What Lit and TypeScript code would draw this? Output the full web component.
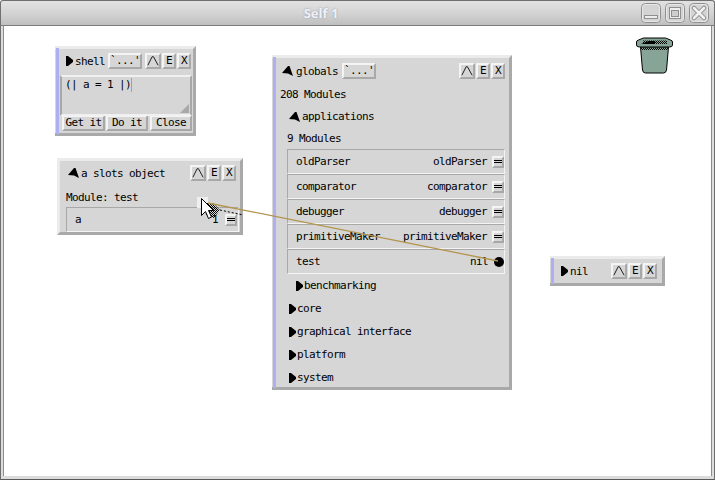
import { LitElement, html, css, svg } from "lit";
import { customElement } from "lit/decorators.js";

const closed = svg`<svg class="tri" width="7" height="10" viewBox="0 0 7 10"><path d="M0 0h2l5 4v2l-5 4H0z" fill="#000"/></svg>`;
const open = svg`<svg class="tri open" width="11" height="10" viewBox="0 0 11 10"><path d="M6 0h1.500L11 10 6 7.500 0 7z" fill="#000"/></svg>`;
const caret = svg`<svg width="14" height="12" viewBox="0 0 14 12"><path d="M1 11 6 1h1.500L13 11" fill="none" stroke="#000" stroke-width="1"/></svg>`;

@customElement("app-root")
export class AppRoot extends LitElement {
  static styles = css`
    :host { display: block; width: 715px; height: 480px; overflow: hidden; position: relative; }
    * { box-sizing: border-box; }
    .frame { width: 715px; height: 480px; display: flex; flex-direction: column; background: #fff;
      font: 11px/14px "DejaVu Sans Mono", monospace; letter-spacing: -0.62px; color: #000; }
    .titlebar { height: 26px; flex: none; position: relative; display: flex; align-items: center; justify-content: center; padding-right: 73px;
      background: linear-gradient(#e2e2e2, #d4d4d4 50%, #bfbfbf); border: 1px solid #6f6f6f; border-bottom-color: #7c7c7c;
      border-radius: 3px 3px 0 0; }
    .wtitle { font: bold 13px "Open Sans", sans-serif; letter-spacing: 0; color: #eef1f6; text-shadow: 0 0 2px #8a94a8; }
    .wm { position: absolute; right: 5px; top: 2px; display: flex; gap: 4px; }
    .wm svg { display: block; }
    .desk { flex: 1; position: relative; background: #fff; border-left: 1px solid #6f6f6f; border-right: 1px solid #6f6f6f; border-bottom: 1px solid #5a5a5a; }
    .desk-in { position: absolute; inset: 0; border: 2px solid #dcdcdc; border-top: none; border-bottom-width: 3px; }
    .desk-in2 { position: absolute; inset: 0 2px 3px 2px; border-left: 1px solid #8c8c8c; border-right: 1px solid #8c8c8c; }
    .win { position: absolute; background: #d6d6d6; border: 3px solid; border-color: #ebebeb #a9a9a9 #a9a9a9 #ebebeb; }
    .blue { border-left: none; }
    .blue::before { content: ""; position: absolute; left: 1px; top: -1px; bottom: -1px; width: 3px; background: #aeaef2; }
    .shell { left: 54px; top: 20px; width: 141px; height: 90px; padding: 4px 0 0 6px; }
    .slots { left: 56px; top: 132px; width: 186px; height: 77px; padding: 4px 4px 0 6px; }
    .globals { left: 271px; top: 29px; width: 240px; height: 335px; padding: 5px 4px 0 8px; }
    .nil { left: 549px; top: 230px; width: 115px; height: 30px; padding: 4px 5px 0 11px; }
    .head { display: flex; align-items: center; height: 16px; }
    .head .label { padding-top: 2px; }
    .tri { flex: none; margin-right: 2px; display: block; }
    .label { white-space: pre; }
    .grow { flex: 1; }
    .btn { height: 16px; display: flex; align-items: center; justify-content: center; background: #d6d6d6; white-space: pre;
      border: 2px solid; border-color: #f4f4f4 #a8a8a8 #a8a8a8 #f4f4f4; flex: none; }
    .b14 { width: 14px; margin-left: 1px; }
    .b16 { width: 16px; }
    .dots { width: 34px; margin-left: 3px; }
    .btns { display: flex; }
    .shell .tri { margin-left: 5px; }
    .shell .dots { margin-right: 3px; }
    .slots .tri { margin-left: 2px; }
    .globals .head .tri { margin-left: 2px; margin-right: 3px; }
    .globals .dots { margin-left: 4px; }
    .editor { margin: 6px 0 0 -1px; width: 132px; height: 41px; border: 2px solid; border-color: #f0f0f0 #a8a8a8 #f0f0f0 #a8a8a8; padding: 1px 3px; position: relative; }
    .editor i { display: inline-block; width: 1px; height: 14px; background: #a0a0a0; vertical-align: top; }
    .grip { position: absolute; right: 1px; bottom: 1px; }
    .actions { display: flex; gap: 1px; margin: -1px 0 0 1px; }
    .a1 { width: 43px; } .a2 { width: 42px; } .a3 { width: 42px; margin-left: 1px; }
    .module { height: 14px; margin-top: 10px; white-space: pre; }
    .slot { height: 25px; display: flex; align-items: center; border: 1px solid; border-color: #a8a8a8 #f4f4f4 #f4f4f4 #a8a8a8; padding: 0 0 0 8px; }
    .slots .slot { margin-top: 2px; width: 173px; border-width: 1.500px; }
    .slots .mini { margin-left: 7px; margin-right: 1px; }
    .line { height: 22px; display: flex; align-items: center; white-space: pre; }
    .first { height: 23px; margin-top: 3px; padding-top: 2px; }
    .sub { margin-left: 7px; }
    .rows { display: flex; flex-direction: column; margin: -1px 0 0 7px; width: 218px; }
    .mini { width: 12px; height: 12px; margin: 0 0 0 5px; background: #d6d6d6; border: 2px solid; border-color: #f4f4f4 #a8a8a8 #a8a8a8 #f4f4f4; display: flex; flex-direction: column; justify-content: center; gap: 1px; flex: none; }
    .mini b { display: block; height: 1px; background: #000; }
    .dot { width: 10px; height: 10px; border-radius: 50%; background: #000; margin: 0 0 0 6px; flex: none; }
    .tree { display: flex; align-items: center; height: 23px; }
    .tree .tri { margin-right: 1px; }
    .tree .tri.open { margin-right: 2px; }
    .overlay { position: absolute; left: 0; top: 0; pointer-events: none; }
    .trash { position: absolute; left: 635px; top: 11px; }
  `;

  private controls() {
    return html`<div class="btns"><div class="btn b16">${caret}</div><div class="btn b14">E</div><div class="btn b14">X</div></div>`;
  }
  private row(name: string, value: string, dot = false) {
    return html`<div class="slot"><span class="label">${name}</span><span class="grow"></span><span class="label">${value}</span>
      ${dot ? html`<div class="dot"></div>` : html`<div class="mini"><b></b><b></b></div>`}</div>`;
  }
  private tree(name: string, indent: number, tri = closed) {
    return html`<div class="tree" style="padding-left:${indent}px">${tri}<span class="label">${name}</span></div>`;
  }

  render() {
    return html`<div class="frame">
      <div class="titlebar"><span class="wtitle">Self 1</span>
        <div class="wm">
          <svg width="20" height="20" viewBox="0 0 20 20"><rect x=".5" y=".5" width="19" height="19" rx="4" fill="#d4d4d4" stroke="#8f8f8f"/><rect x="1.500" y="1.500" width="17" height="17" rx="3" fill="none" stroke="#e8e8e8"/><rect x="3.500" y="12.500" width="13" height="3" fill="#ededed" stroke="#8f8f8f"/></svg>
          <svg width="20" height="20" viewBox="0 0 20 20"><rect x=".5" y=".5" width="19" height="19" rx="4" fill="#d4d4d4" stroke="#8f8f8f"/><rect x="1.500" y="1.500" width="17" height="17" rx="3" fill="none" stroke="#e8e8e8"/><rect x="4.500" y="4.500" width="11" height="11" fill="#ededed" stroke="#8f8f8f"/><rect x="6.500" y="7.500" width="7" height="6" fill="#cfcfcf" stroke="#8f8f8f"/></svg>
          <svg width="20" height="20" viewBox="0 0 20 20"><rect x=".5" y=".5" width="19" height="19" rx="4" fill="#d4d4d4" stroke="#8f8f8f"/><rect x="1.500" y="1.500" width="17" height="17" rx="3" fill="none" stroke="#e8e8e8"/><path d="M5 5l10 10M15 5 5 15" stroke="#8f8f8f" stroke-width="4.500" stroke-linecap="round"/><path d="M5 5l10 10M15 5 5 15" stroke="#f0f0f0" stroke-width="2.500" stroke-linecap="round"/></svg>
        </div>
      </div>
      <div class="desk">
        <div class="desk-in"></div><div class="desk-in2"></div>

        <div class="win shell blue">
          <div class="head">${closed}<span class="label">shell</span><div class="btn dots">\`...'</div>${this.controls()}</div>
          <div class="editor"><span class="label">(| a = 1 |)</span><i></i>
            <svg class="grip" width="9" height="9" viewBox="0 0 9 9"><path d="M9 0v9H0z" fill="#a8a8a8"/></svg></div>
          <div class="actions"><div class="btn a1">Get it</div><div class="btn a2">Do it</div><div class="btn a3">Close</div></div>
        </div>

        <div class="win slots">
          <div class="head">${open}<span class="label">a slots object</span><span class="grow"></span>${this.controls()}</div>
          <div class="module">Module: test</div>
          <div class="slot"><span class="label">a</span><span class="grow"></span><span class="label">1</span><div class="mini"><b></b><b></b></div></div>
        </div>

        <div class="win globals blue">
          <div class="head">${open}<span class="label">globals</span><div class="btn dots">\`...'</div><span class="grow"></span>${this.controls()}</div>
          <div class="line first">208 Modules</div>
          ${this.tree("applications", 9, open)}
          <div class="line sub">9 Modules</div>
          <div class="rows">
            ${this.row("oldParser", "oldParser")}${this.row("comparator", "comparator")}${this.row("debugger", "debugger")}
            ${this.row("primitiveMaker", "primitiveMaker")}${this.row("test", "nil", true)}
          </div>
          ${this.tree("benchmarking", 16)}${this.tree("core", 9)}${this.tree("graphical interface", 9)}${this.tree("platform", 9)}${this.tree("system", 9)}
        </div>

        <div class="win nil blue">
          <div class="head">${closed}<span class="label">nil</span><span class="grow"></span>${this.controls()}</div>
        </div>

        <svg class="trash" width="38" height="37" viewBox="0 0 38 37">
          <defs><pattern id="st" width="2" height="2" patternUnits="userSpaceOnUse"><path d="M0 0h1v1H0zM1 1h1v1H1z" fill="#000"/></pattern></defs>
          <path d="M4.500 10 6.500 33q.5 3 3 3h18q2.500 0 3-3l2-23z" fill="#87a596" stroke="#000"/>
          <path d="M5 11h27v2H5z" fill="url(#st)"/>
          <path d="M.5 5q0-1.500 2-2l5-2h22l5 2q2 .5 2 2v3q0 2-3 2H3.500q-3 0-3-2z" fill="#87a596" stroke="#000"/>
          <path d="M7 3.500h24v3.500H7z" fill="url(#st)"/><path d="M13 4h6v3H5z" fill="#000"/>
        </svg>
      </div>
      <svg class="overlay" width="715" height="480" viewBox="0 0 715 480">
        <defs><pattern id="chk" width="2" height="2" patternUnits="userSpaceOnUse"><path d="M0 0h1v1H0zM1 1h1v1H1z" fill="#000"/></pattern></defs>
        <rect x="197" y="197" width="11" height="11" fill="#efefef"/>
        <path d="M205 203h8l7 7-6 8-8-3z" fill="url(#chk)"/>
        <path d="M208 203 498 261" stroke="#b3954f" stroke-width="1.300" fill="none"/>
        <path d="M220 210 243 215" stroke="#000" stroke-dasharray="2 2" fill="none"/>
        <path d="M201.500 198.500v17l4-4 3 7 3-1.500-3-6.500h5z" fill="#fff" stroke="#000"/>
      </svg>
    </div>`;
  }
}
